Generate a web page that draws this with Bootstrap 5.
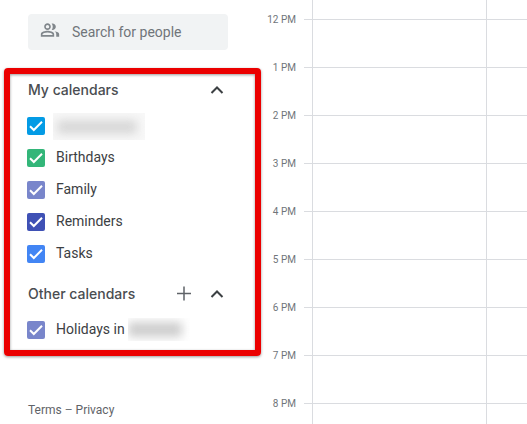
<!DOCTYPE html>
<html lang="en">
<head>
<meta charset="utf-8">
<meta name="viewport" content="width=device-width, initial-scale=1">
<title>Calendar</title>
<link href="https://cdn.jsdelivr.net/npm/bootstrap@5.3.0/dist/css/bootstrap.min.css" rel="stylesheet">
<style>
  body { font-family: Roboto, "Liberation Sans", sans-serif; font-size: 14px; line-height: 20px; color: #3c4043; background: #fff; }
  .sidebar { width: 264px; padding-top: 14px; }
  .people-search { height: 36px; margin: 0 36px 18px 28px; padding-left: 12px; background: #f1f3f4; border-radius: 4px; }
  .people-search svg { margin-bottom: 4px; }
  .people-search .form-control { font-size: 14px; color: #3c4043; padding: 0 0 0 12px; }
  .people-search .form-control::placeholder { color: #70757a; opacity: 1; }
  .highlight { margin: 0 3px 0 4px; padding: 0 18px 4px; border: 6px solid #eb0000; border-radius: 4px; box-shadow: 0 1px 3px rgba(0,0,0,.4), inset 0 1px 3px rgba(0,0,0,.4); }
  .group-head { height: 32px; margin-bottom: 4px; padding-right: 8px; }
  .group-head h2 { font: 500 14px/20px Inter, "Liberation Sans", sans-serif; color: #4a4d51; }
  .calendar-list + .group-head { margin-top: 8px; }
  .icon-btn { width: 24px; height: 24px; line-height: 0; color: #3c4043; }
  .calendar-row { height: 32px; }
  .calendar-row label { padding-bottom: 2px; }
  .calendar-row .form-check-input { width: 18px; height: 18px; margin: 0 11px 0 -1px; border: 0; border-radius: 2px; }
  .calendar-row .form-check-input:checked { background-color: var(--tone); background-size: 18px 18px; background-image: url("data:image/svg+xml,%3csvg xmlns='http://www.w3.org/2000/svg' viewBox='0 0 18 18'%3e%3cpath fill='none' stroke='%23fff' stroke-width='2' d='M3 9.2l3.8 3.8L15 4.8'/%3e%3c/svg%3e"); }
  .tone-sky { --tone: #039be5; }
  .tone-green { --tone: #33b679; }
  .tone-lavender { --tone: #7986cb; }
  .tone-indigo { --tone: #3f51b5; }
  .tone-blue { --tone: #4285f4; }
  .calendar-row .redacted { width: 92px; height: 27px; margin-left: -3px; padding: 7px 8px 6px 4px; background: #f8f8f8; }
  .redacted-fill { background: #d8d8d8; filter: blur(5px); }
  .calendar-row .redacted-short { width: 62px; height: 23px; margin-left: 3px; padding: 4px 8px 4px 0; background: none; }
  .redacted-short .redacted-fill { background: #cecece; }
  .legal { margin: 44px 0 0 28px; font-size: 12px; color: #70757a; }
  .legal a { color: #5f6368; }
  .hours { width: 40px; padding: 12px 8px 0 0; font-size: 10px; line-height: 16px; color: #70757a; }
  .hours div { margin-bottom: 32px; }
  .slots { --line: #dadce0; }
  .slot { height: 48px; border-top: 1px solid var(--line); }
  .slot-first { height: 19px; border-top: 0; }
  .tick { width: 8px; }
  .day { border-left: 1px solid var(--line); }
  .day-wide { width: 174px; }
</style>
<script src="https://cdn.jsdelivr.net/npm/bootstrap@5.3.0/dist/js/bootstrap.bundle.min.js"></script>
</head>
<body>
<div class="d-flex vh-100 overflow-hidden">
  <aside class="sidebar flex-shrink-0">
    <div class="people-search d-flex align-items-center">
      <svg width="20" height="20" viewBox="0 0 24 24" fill="#80868b" class="flex-shrink-0" aria-hidden="true"><path d="M9 12c2.200 0 4-1.800 4-4s-1.800-4-4-4-4 1.800-4 4 1.800 4 4 4zm0-6c1.100 0 2 .9 2 2s-.9 2-2 2-2-.9-2-2 .9-2 2-2zm0 7c-2.700 0-8 1.300-8 4v3h16v-3c0-2.700-5.300-4-8-4zm6 5H3v-1c0-.7 3.100-2 6-2s6 1.300 6 2v1zM14 4.200c.8 1 1.300 2.300 1.300 3.800s-.5 2.800-1.300 3.800c2.600.6 5-1.300 5-3.800s-2.400-4.400-5-3.800zM17.500 13.500c1.200.9 2 2 2 3.500v3h3.500v-3c0-1.800-2.500-3.100-5.500-3.500z"/></svg>
      <input type="text" class="form-control border-0 bg-transparent shadow-none" placeholder="Search for people" aria-label="Search for people">
    </div>

    <section class="highlight">
      <div class="group-head d-flex align-items-center">
        <h2 class="m-0 me-auto">My calendars</h2>
        <button type="button" class="btn icon-btn p-0 border-0" aria-label="Collapse my calendars">
          <svg width="24" height="24" viewBox="0 0 24 24" fill="none" stroke="currentColor" stroke-width="2" aria-hidden="true"><path d="M6.500 15l5.500-5.500 5.500 5.500"/></svg>
        </button>
      </div>
      <div class="calendar-list">
        <div class="calendar-row d-flex align-items-center">
          <input class="form-check-input tone-sky flex-shrink-0" type="checkbox" id="cal-own" aria-label="Own calendar" checked>
          <label class="redacted overflow-hidden" for="cal-own"><span class="redacted-fill d-block h-100"></span></label>
        </div>
        <div class="calendar-row d-flex align-items-center">
          <input class="form-check-input tone-green flex-shrink-0" type="checkbox" id="cal-birthdays" checked>
          <label for="cal-birthdays">Birthdays</label>
        </div>
        <div class="calendar-row d-flex align-items-center">
          <input class="form-check-input tone-lavender flex-shrink-0" type="checkbox" id="cal-family" checked>
          <label for="cal-family">Family</label>
        </div>
        <div class="calendar-row d-flex align-items-center">
          <input class="form-check-input tone-indigo flex-shrink-0" type="checkbox" id="cal-reminders" checked>
          <label for="cal-reminders">Reminders</label>
        </div>
        <div class="calendar-row d-flex align-items-center">
          <input class="form-check-input tone-blue flex-shrink-0" type="checkbox" id="cal-tasks" checked>
          <label for="cal-tasks">Tasks</label>
        </div>
      </div>
      <div class="group-head d-flex align-items-center">
        <h2 class="m-0 me-auto">Other calendars</h2>
        <button type="button" class="btn icon-btn p-0 border-0 me-2" aria-label="Add other calendars">
          <svg width="24" height="24" viewBox="0 0 24 24" fill="none" stroke="#5f6368" stroke-width="1.500" aria-hidden="true"><path d="M11 4.500v14M4 11.500h14"/></svg>
        </button>
        <button type="button" class="btn icon-btn p-0 border-0" aria-label="Collapse other calendars">
          <svg width="24" height="24" viewBox="0 0 24 24" fill="none" stroke="currentColor" stroke-width="2" aria-hidden="true"><path d="M6.500 15l5.500-5.500 5.500 5.500"/></svg>
        </button>
      </div>
      <div class="calendar-row d-flex align-items-center">
        <input class="form-check-input tone-lavender flex-shrink-0" type="checkbox" id="cal-holidays" checked>
        <label class="d-flex align-items-center" for="cal-holidays">Holidays in <span class="redacted redacted-short overflow-hidden"><span class="redacted-fill d-block h-100"></span></span></label>
      </div>
    </section>

    <footer class="legal"><a href="#" class="text-decoration-none">Terms</a> – <a href="#" class="text-decoration-none">Privacy</a></footer>
  </aside>

  <main class="d-flex flex-grow-1">
    <div class="hours flex-shrink-0 text-end text-nowrap">
      <div>12 PM</div><div>1 PM</div><div>2 PM</div><div>3 PM</div><div>4 PM</div><div>5 PM</div><div>6 PM</div><div>7 PM</div><div>8 PM</div>
    </div>
    <div class="slots flex-grow-1">
      <div class="slot slot-first d-flex"><div class="tick"></div><div class="day day-wide"></div><div class="day flex-grow-1"></div></div>
      <div class="slot d-flex"><div class="tick"></div><div class="day day-wide"></div><div class="day flex-grow-1"></div></div>
      <div class="slot d-flex"><div class="tick"></div><div class="day day-wide"></div><div class="day flex-grow-1"></div></div>
      <div class="slot d-flex"><div class="tick"></div><div class="day day-wide"></div><div class="day flex-grow-1"></div></div>
      <div class="slot d-flex"><div class="tick"></div><div class="day day-wide"></div><div class="day flex-grow-1"></div></div>
      <div class="slot d-flex"><div class="tick"></div><div class="day day-wide"></div><div class="day flex-grow-1"></div></div>
      <div class="slot d-flex"><div class="tick"></div><div class="day day-wide"></div><div class="day flex-grow-1"></div></div>
      <div class="slot d-flex"><div class="tick"></div><div class="day day-wide"></div><div class="day flex-grow-1"></div></div>
      <div class="slot d-flex"><div class="tick"></div><div class="day day-wide"></div><div class="day flex-grow-1"></div></div>
      <div class="slot d-flex"><div class="tick"></div><div class="day day-wide"></div><div class="day flex-grow-1"></div></div>
    </div>
  </main>
</div>
</body>
</html>
